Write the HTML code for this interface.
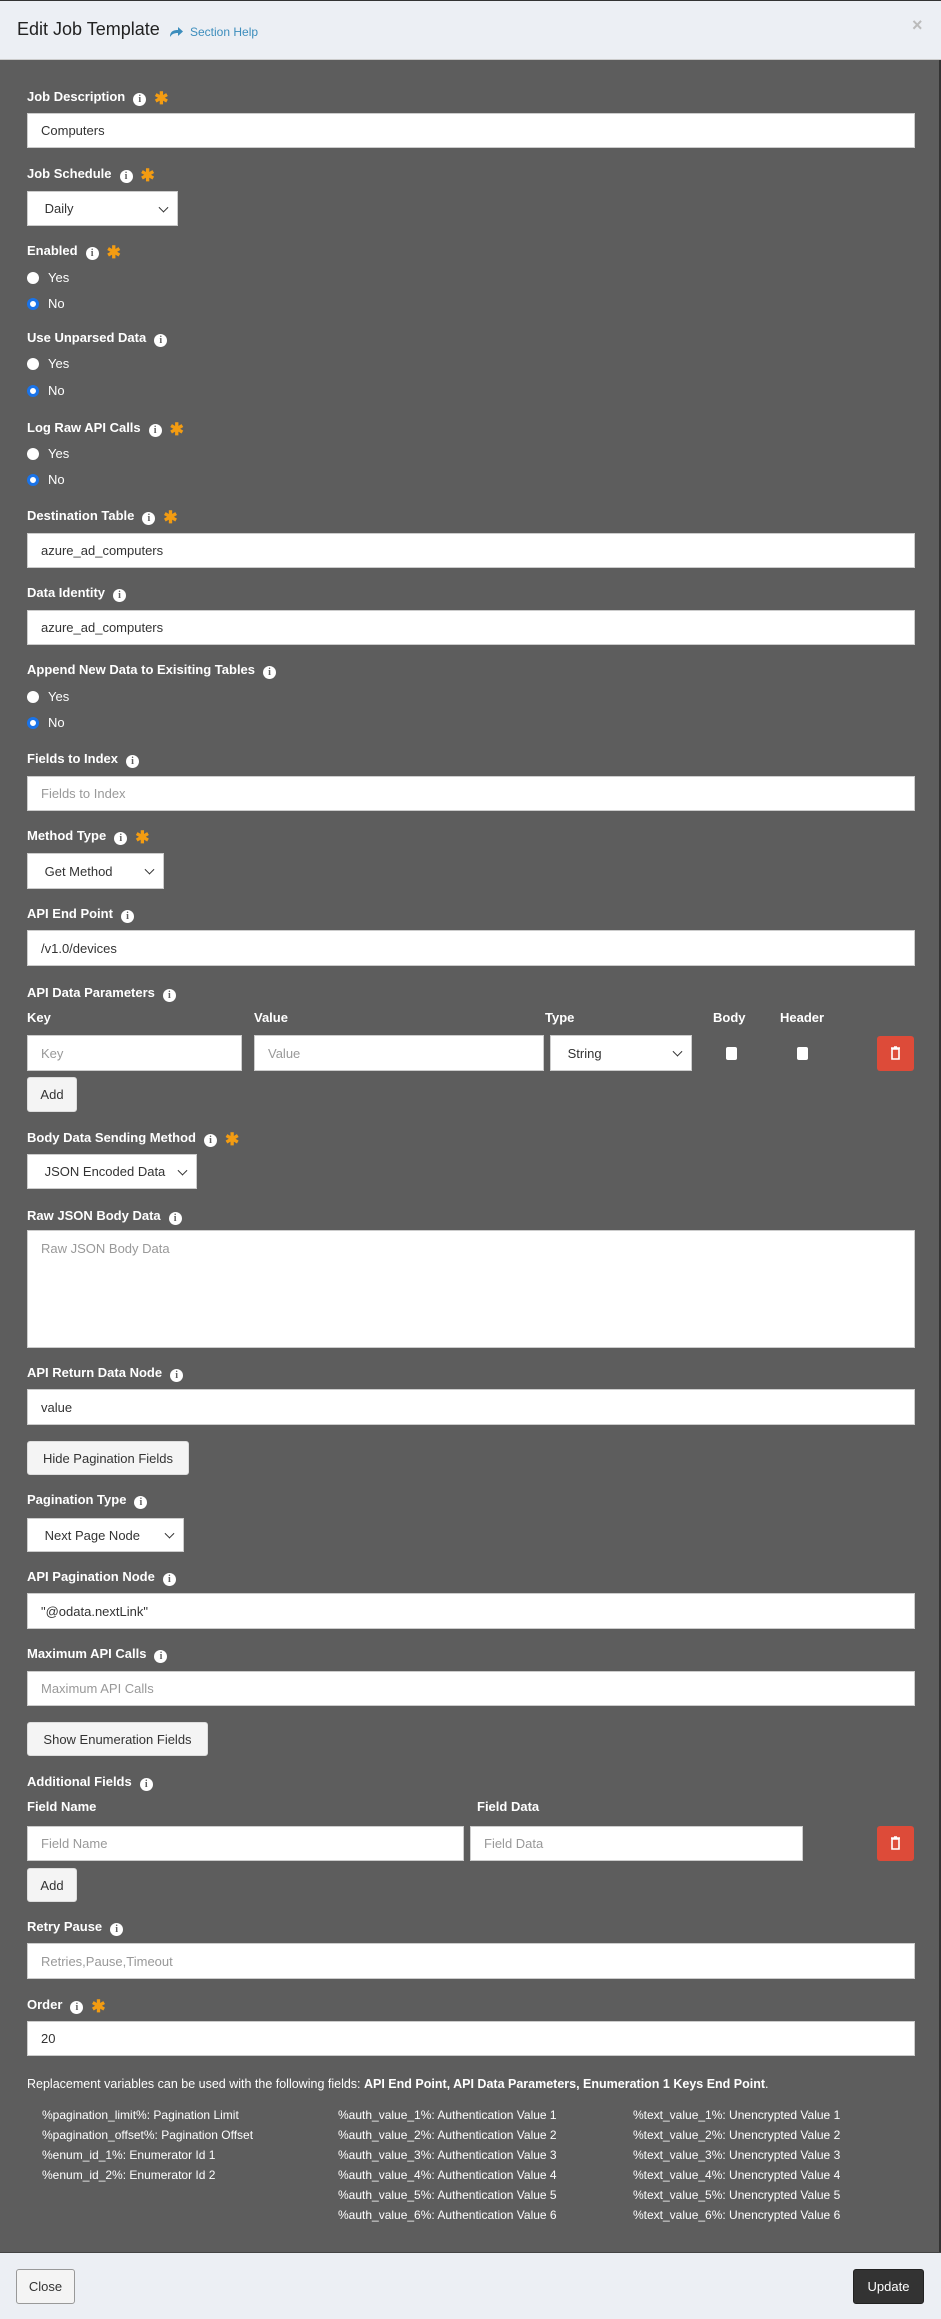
<!DOCTYPE html>
<html><head><meta charset="utf-8"><style>
*{box-sizing:border-box;margin:0;padding:0}
body{width:941px;height:2318px;background:#5d5d5d;font-family:"Liberation Sans",sans-serif;position:relative;overflow:hidden;border-top:1px solid #333;border-right:2px solid #333}
.hdr{position:absolute;left:0;top:0;width:941px;height:59px;background:#eceff4;border-bottom:1px solid #ccc}
.ftr{position:absolute;left:0;top:2251px;width:941px;height:67px;background:#eceff4;border-top:1px solid #444}
.a{position:absolute}
.lbl{position:absolute;left:27px;color:#fff;font-weight:bold;font-size:13px;line-height:16px;white-space:nowrap;transform:translateY(-8px)}
.i{display:inline-block;width:13px;height:13px;border-radius:50%;background:#fff;color:#5d5d5d;font-size:10px;line-height:13px;text-align:center;font-weight:bold;font-family:"Liberation Serif",serif;margin-left:8px;vertical-align:-1px}
.s{color:#f39c12;margin-left:8px;font-size:17px;vertical-align:-3px}
.in{position:absolute;background:#fff;border:1px solid #ccc;font-size:13px;color:#333;padding-left:13px;display:flex;align-items:center}
.ph{color:#999}
.sel::after{content:"";position:absolute;right:10px;top:50%;width:6px;height:6px;border-right:1.5px solid #333;border-bottom:1.5px solid #333;transform:translateY(-70%) rotate(45deg)}
.r{position:absolute;left:27px;color:#fff;font-size:13px;line-height:16px;transform:translateY(-8px)}
.r b{display:inline-block;width:12px;height:12px;border-radius:50%;background:#fff;vertical-align:-2px;margin-right:9px}
.r b.on{border:3px solid #1a73e8}
.btn{position:absolute;background:#f4f4f4;border:1px solid #ddd;border-radius:3px;font-size:13px;color:#333;display:flex;align-items:center;justify-content:center}
.tr{position:absolute;width:37px;height:35px;background:#dd4b39;border-radius:3px}
.cb{position:absolute;width:11px;height:13px;background:#fff;border-radius:2px}
.v{position:absolute;color:#fff;font-size:12px;line-height:14px;white-space:nowrap;transform:translateY(-7px)}
</style></head><body>
<div class="hdr">
<div class="a" style="left:17px;top:18px;font-size:18px;color:#222;white-space:nowrap">Edit Job Template</div>
<svg class="a" style="left:169px;top:25px" width="14" height="12" viewBox="0 0 14 12"><path d="M1 11 C1 5 5 4 9 4 V1 L14 5.5 L9 10 V7 C5 7 3 8 1 11Z" fill="#3c8dbc"/></svg>
<div class="a" style="left:190px;top:24px;font-size:12px;color:#3c8dbc;white-space:nowrap">Section Help</div>
<div class="a" style="left:912px;top:14px;font-size:18px;color:#bbb;font-weight:bold">×</div>
</div>

<div class="lbl" style="top:96px">Job Description<span class="i">i</span><span class="s">✱</span></div>
<div class="in" style="left:27px;top:112px;width:888px;height:35px">Computers</div>
<div class="lbl" style="top:173px">Job Schedule<span class="i">i</span><span class="s">✱</span></div>
<div class="in sel" style="left:27px;top:190px;width:151px;height:35px">&nbsp;Daily</div>
<div class="lbl" style="top:250px">Enabled<span class="i">i</span><span class="s">✱</span></div>
<div class="r" style="top:277px"><b></b>Yes</div>
<div class="r" style="top:303px"><b class="on"></b>No</div>
<div class="lbl" style="top:337px">Use Unparsed Data<span class="i">i</span></div>
<div class="r" style="top:363px"><b></b>Yes</div>
<div class="r" style="top:390px"><b class="on"></b>No</div>
<div class="lbl" style="top:427px">Log Raw API Calls<span class="i">i</span><span class="s">✱</span></div>
<div class="r" style="top:453px"><b></b>Yes</div>
<div class="r" style="top:479px"><b class="on"></b>No</div>
<div class="lbl" style="top:515px">Destination Table<span class="i">i</span><span class="s">✱</span></div>
<div class="in" style="left:27px;top:532px;width:888px;height:35px">azure_ad_computers</div>
<div class="lbl" style="top:592px">Data Identity<span class="i">i</span></div>
<div class="in" style="left:27px;top:609px;width:888px;height:35px">azure_ad_computers</div>
<div class="lbl" style="top:669px">Append New Data to Exisiting Tables<span class="i">i</span></div>
<div class="r" style="top:696px"><b></b>Yes</div>
<div class="r" style="top:722px"><b class="on"></b>No</div>
<div class="lbl" style="top:758px">Fields to Index<span class="i">i</span></div>
<div class="in ph" style="left:27px;top:775px;width:888px;height:35px">Fields to Index</div>
<div class="lbl" style="top:835px">Method Type<span class="i">i</span><span class="s">✱</span></div>
<div class="in sel" style="left:27px;top:852px;width:137px;height:36px">&nbsp;Get Method</div>
<div class="lbl" style="top:913px">API End Point<span class="i">i</span></div>
<div class="in" style="left:27px;top:929px;width:888px;height:36px">/v1.0/devices</div>
<div class="lbl" style="top:992px">API Data Parameters<span class="i">i</span></div>
<div class="lbl" style="top:1017px">Key</div>
<div class="lbl" style="top:1017px;left:254px">Value</div>
<div class="lbl" style="top:1017px;left:545px">Type</div>
<div class="lbl" style="top:1017px;left:713px">Body</div>
<div class="lbl" style="top:1017px;left:780px">Header</div>
<div class="in ph" style="left:27px;top:1034px;width:215px;height:36px">Key</div>
<div class="in ph" style="left:254px;top:1034px;width:290px;height:36px">Value</div>
<div class="in sel" style="left:550px;top:1034px;width:142px;height:36px">&nbsp;String</div>
<div class="cb" style="left:726px;top:1046px"></div>
<div class="cb" style="left:797px;top:1046px"></div>
<div class="tr" style="left:877px;top:1035px"><svg width="37" height="35" viewBox="0 0 37 35"><path d="M14 12h9M17 11h3M15 13v10h7V13z" stroke="#fff" stroke-width="1.6" fill="none"/></svg></div>
<div class="btn" style="left:27px;top:1076px;width:50px;height:35px">Add</div>
<div class="lbl" style="top:1137px">Body Data Sending Method<span class="i">i</span><span class="s">✱</span></div>
<div class="in sel" style="left:27px;top:1153px;width:170px;height:35px">&nbsp;JSON Encoded Data</div>
<div class="lbl" style="top:1215px">Raw JSON Body Data<span class="i">i</span></div>
<div class="in ph" style="left:27px;top:1229px;width:888px;height:118px;align-items:flex-start;padding-top:10px">Raw JSON Body Data</div>
<div class="lbl" style="top:1372px">API Return Data Node<span class="i">i</span></div>
<div class="in" style="left:27px;top:1388px;width:888px;height:36px">value</div>
<div class="btn" style="left:27px;top:1440px;width:162px;height:34px">Hide Pagination Fields</div>
<div class="lbl" style="top:1499px">Pagination Type<span class="i">i</span></div>
<div class="in sel" style="left:27px;top:1517px;width:157px;height:34px">&nbsp;Next Page Node</div>
<div class="lbl" style="top:1576px">API Pagination Node<span class="i">i</span></div>
<div class="in" style="left:27px;top:1592px;width:888px;height:36px">"@odata.nextLink"</div>
<div class="lbl" style="top:1653px">Maximum API Calls<span class="i">i</span></div>
<div class="in ph" style="left:27px;top:1670px;width:888px;height:35px">Maximum API Calls</div>
<div class="btn" style="left:27px;top:1721px;width:181px;height:34px">Show Enumeration Fields</div>
<div class="lbl" style="top:1781px">Additional Fields<span class="i">i</span></div>
<div class="lbl" style="top:1806px">Field Name</div>
<div class="lbl" style="top:1806px;left:477px">Field Data</div>
<div class="in ph" style="left:27px;top:1825px;width:437px;height:35px">Field Name</div>
<div class="in ph" style="left:470px;top:1825px;width:333px;height:35px">Field Data</div>
<div class="tr" style="left:877px;top:1825px"><svg width="37" height="35" viewBox="0 0 37 35"><path d="M14 12h9M17 11h3M15 13v10h7V13z" stroke="#fff" stroke-width="1.6" fill="none"/></svg></div>
<div class="btn" style="left:27px;top:1867px;width:50px;height:34px">Add</div>
<div class="lbl" style="top:1926px">Retry Pause<span class="i">i</span></div>
<div class="in ph" style="left:27px;top:1942px;width:888px;height:36px">Retries,Pause,Timeout</div>
<div class="lbl" style="top:2004px">Order<span class="i">i</span><span class="s">✱</span></div>
<div class="in" style="left:27px;top:2020px;width:888px;height:35px">20</div>
<div class="v" style="left:27px;top:2083px;font-size:12.5px">Replacement variables can be used with the following fields: <b>API End Point, API Data Parameters, Enumeration 1 Keys End Point</b>.</div>
<div class="v" style="left:42px;top:2114px">%pagination_limit%: Pagination Limit</div>
<div class="v" style="left:42px;top:2134px">%pagination_offset%: Pagination Offset</div>
<div class="v" style="left:42px;top:2154px">%enum_id_1%: Enumerator Id 1</div>
<div class="v" style="left:42px;top:2174px">%enum_id_2%: Enumerator Id 2</div>
<div class="v" style="left:338px;top:2114px">%auth_value_1%: Authentication Value 1</div>
<div class="v" style="left:338px;top:2134px">%auth_value_2%: Authentication Value 2</div>
<div class="v" style="left:338px;top:2154px">%auth_value_3%: Authentication Value 3</div>
<div class="v" style="left:338px;top:2174px">%auth_value_4%: Authentication Value 4</div>
<div class="v" style="left:338px;top:2194px">%auth_value_5%: Authentication Value 5</div>
<div class="v" style="left:338px;top:2214px">%auth_value_6%: Authentication Value 6</div>
<div class="v" style="left:633px;top:2114px">%text_value_1%: Unencrypted Value 1</div>
<div class="v" style="left:633px;top:2134px">%text_value_2%: Unencrypted Value 2</div>
<div class="v" style="left:633px;top:2154px">%text_value_3%: Unencrypted Value 3</div>
<div class="v" style="left:633px;top:2174px">%text_value_4%: Unencrypted Value 4</div>
<div class="v" style="left:633px;top:2194px">%text_value_5%: Unencrypted Value 5</div>
<div class="v" style="left:633px;top:2214px">%text_value_6%: Unencrypted Value 6</div>
<div class="ftr">
<div class="btn" style="left:16px;top:16px;width:59px;height:35px;border:1px solid #999">Close</div>
<div class="btn" style="left:853px;top:16px;width:71px;height:35px;background:#333;border-color:#222;color:#fff">Update</div>
</div>
</body></html>
